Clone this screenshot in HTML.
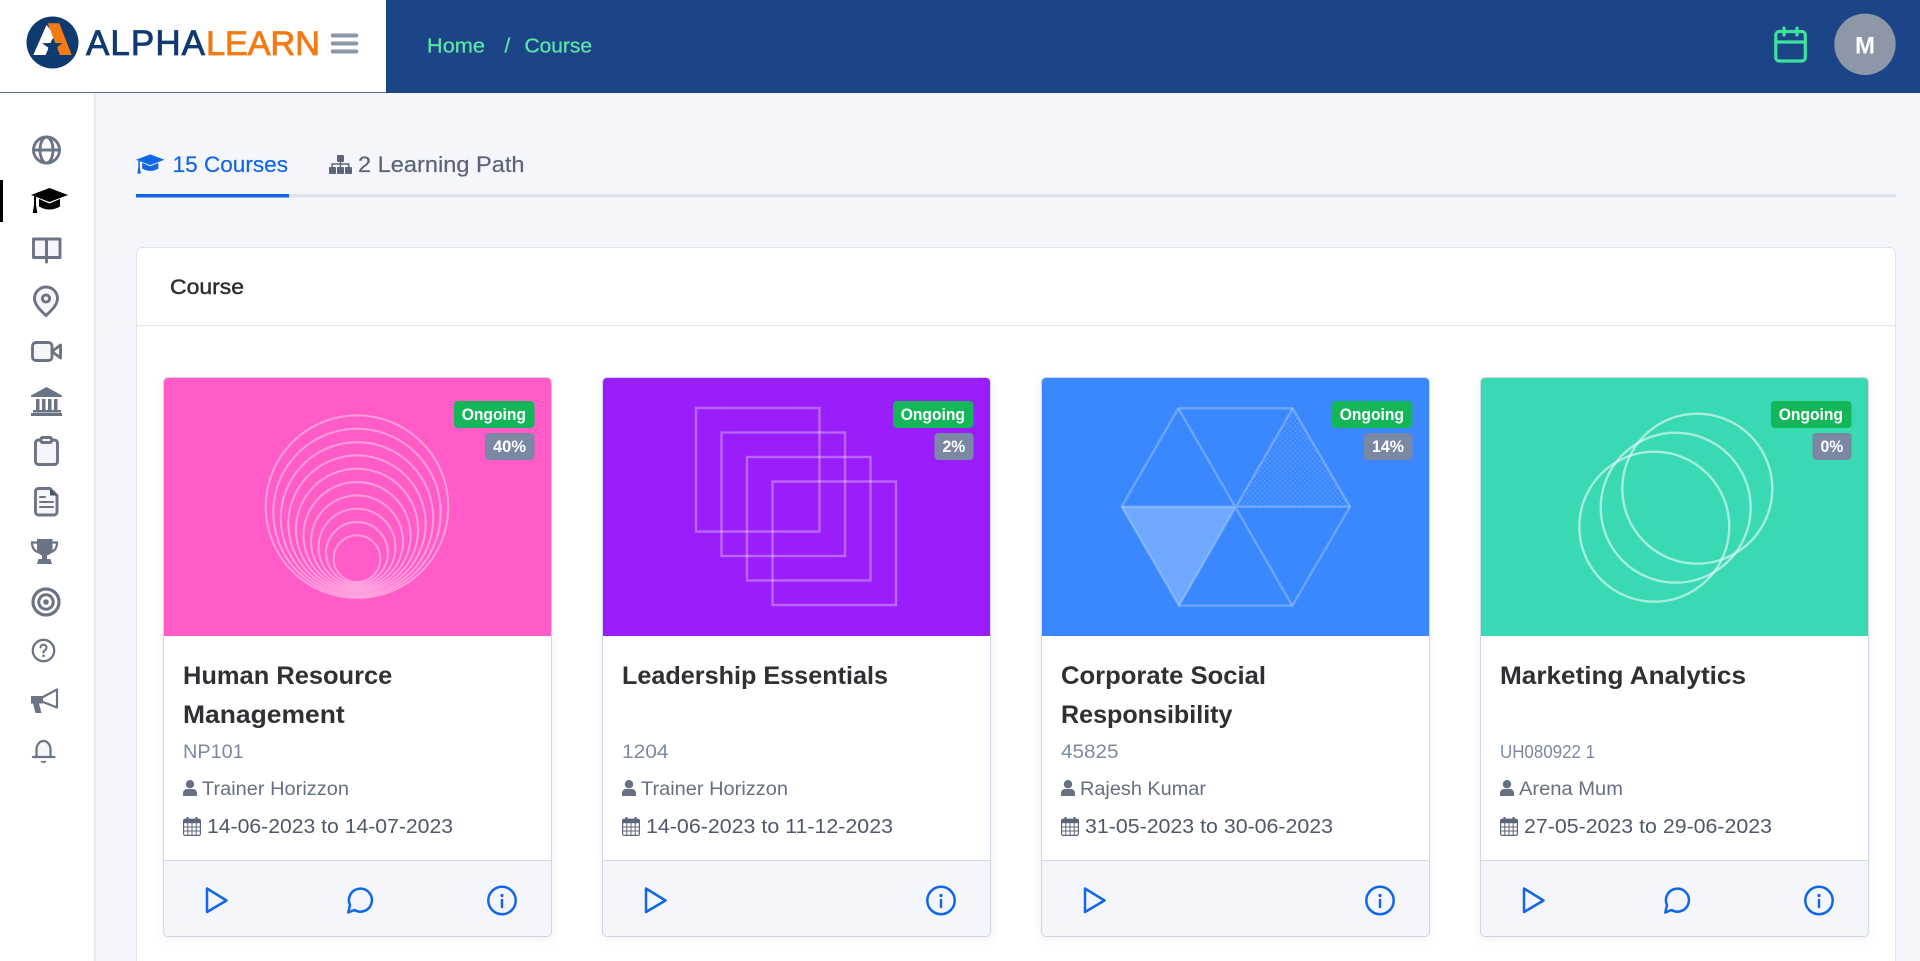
<!DOCTYPE html>
<html lang="en">
<head>
<meta charset="utf-8">
<title>Course</title>
<style>
html,body{margin:0;padding:0;width:1920px;height:961px;overflow:hidden;background:#f4f6fb}
svg{display:block;position:absolute;left:0;top:0}
text{font-family:"Liberation Sans",sans-serif}
.t{font-weight:700;font-size:25px;fill:#2f3033}
.c{font-size:19.5px;fill:#7c89a3}
.n{font-size:19.5px;fill:#667080}
.d{font-size:20px;fill:#4f586b}
.b{font-weight:700;font-size:17px;fill:#fff}
.ic{fill:#f5f6fa;stroke:#6b7485;stroke-width:2.9;stroke-linecap:round;stroke-linejoin:round}
.bl{fill:none;stroke:#1266ea;stroke-width:2.5;stroke-linecap:round;stroke-linejoin:round}
</style>
</head>
<body>
<svg width="1920" height="961" viewBox="0 0 1920 961" xmlns="http://www.w3.org/2000/svg">
<defs>
  <filter id="sh" x="-5%" y="-5%" width="110%" height="110%"><feDropShadow dx="0" dy="2" stdDeviation="4" flood-color="#5a6a90" flood-opacity=".10"/></filter>
  <pattern id="dots" width="5" height="5" patternUnits="userSpaceOnUse"><circle cx="1.5" cy="1.5" r="1.1" fill="#fff" fill-opacity=".14"/><circle cx="4" cy="4" r="1.1" fill="#fff" fill-opacity=".14"/></pattern>
  <symbol id="cap" viewBox="0 0 37 25">
    <path d="M18.5 0 37 7 18.5 14 0 7Z"/>
    <path d="M8 11 18.5 15.5 29 11V18.5Q18.5 24.5 8 18.5Z"/>
    <path d="M3 8h2v9l1.3 8H1.7l1.3-8Z"/>
  </symbol>
  <symbol id="user" viewBox="0 0 14 16">
    <circle cx="7" cy="4.2" r="4.2" fill="#667080"/>
    <path d="M0 13.5C0 10.5 2 9 4 9h6c2 0 4 1.5 4 4.5V16H0Z" fill="#667080"/>
  </symbol>
  <symbol id="cal" viewBox="0 0 18 19">
    <path d="M3.5 0h2v3h-2zM12.5 0h2v3h-2z" fill="#5b6478"/>
    <rect x=".6" y="2.2" width="16.8" height="16.2" rx="1.5" fill="none" stroke="#5b6478" stroke-width="1.2"/>
    <rect x=".6" y="2.2" width="16.8" height="4" fill="#5b6478"/>
    <path d="M.6 10h16.8M.6 14h16.8M4.8 6v12M9 6v12M13.2 6v12" stroke="#5b6478" stroke-width="1"/>
  </symbol>
</defs>

<!-- Header -->
<rect x="0" y="0" width="1920" height="93" fill="#1c4587"/>
<rect x="0" y="0" width="386" height="92" fill="#fff"/>
<rect x="0" y="92" width="386" height="1" fill="#56698c"/>
<circle cx="52.5" cy="42.5" r="26" fill="#0f3a70"/>
<path d="M46.5 25 33.3 55H45.5L55 35Z" fill="#fff"/>
<path d="M47.7 23.3H59.3L71.7 55H60Z" fill="#f57a14"/>
<path d="M52.5 38.5 54.6 43 62.5 43.3 56.6 47.6 58.6 55 52.5 51 46.4 55 48.4 47.6 42 43.3 50.4 43Z" fill="#0f3a70"/>
<text x="86" y="55" font-size="35" textLength="119" lengthAdjust="spacing" fill="#0f3a70" stroke="#0f3a70" stroke-width=".8">ALPHA</text>
<text x="206" y="55" font-size="34.5" textLength="114" lengthAdjust="spacing" fill="#f57a14" stroke="#f57a14" stroke-width=".8">LEARN</text>
<path d="M332.8 35.5H356.2M332.8 43.5H356.2M332.8 51.5H356.2" stroke="#8a94a6" stroke-width="4" stroke-linecap="round"/>
<g fill="#5de3a8" stroke="#5de3a8" stroke-width=".3">
<text x="427" y="52.5" font-size="20.5" textLength="58" lengthAdjust="spacingAndGlyphs">Home</text>
<text x="504.5" y="52.5" font-size="20.5">/</text>
<text x="524.5" y="52.5" font-size="20.5" textLength="67.5" lengthAdjust="spacingAndGlyphs">Course</text>
</g>
<g fill="none" stroke="#3ee39b" stroke-width="3.2" stroke-linecap="round" stroke-linejoin="round">
  <rect x="1775.8" y="31.5" width="29.5" height="29.5" rx="3.5"/>
  <path d="M1775.8 42H1805.3M1784 28V35M1797 28V35"/>
</g>
<circle cx="1865" cy="44.3" r="30.7" fill="#8d97a8"/>
<text x="1865" y="53.5" font-size="24" font-weight="700" text-anchor="middle" fill="#fff">M</text>

<!-- Sidebar -->
<rect x="0" y="93" width="94" height="868" fill="#fff"/>
<rect x="94" y="93" width="1.5" height="868" fill="#e3e6f0"/>
<rect x="0" y="180" width="3" height="42" fill="#000"/>
<g class="ic">
  <circle cx="46.5" cy="150" r="13" fill="none"/><ellipse cx="46.5" cy="150" rx="6.5" ry="13" fill="none"/><path d="M33.5 150H59.5" fill="none"/>
  <path d="M46.5 239H33.5V257.5H46.5ZM46.5 239H60V257.5H46.5Z"/><path d="M46.5 239V262"/>
  <path d="M46 315.5C40 310 34.5 304.5 34.5 298.5A11.5 11.5 0 0 1 57.5 298.5C57.5 304.5 52 310 46 315.5Z"/><circle cx="46" cy="298.5" r="3.6" fill="none"/>
  <rect x="32.5" y="342.5" width="19.5" height="18" rx="3.5"/><path d="M52 351.5 60.5 345V358Z" fill="none"/>
  <rect x="35.5" y="440" width="22" height="24.5" rx="3"/><rect x="41" y="437.5" width="10.5" height="5" rx="1.5" fill="#f5f6fa"/>
  <path d="M38 488.5H50L57 495.5V512A3 3 0 0 1 54 515H38.5A3 3 0 0 1 35.5 512V491.5A3 3 0 0 1 38 488.5Z"/>
  <path d="M40 497H45M40 502H53M40 507H53" stroke-width="2" fill="none"/>
  <circle cx="46" cy="602" r="13" stroke-width="3.2" fill="none"/><circle cx="46" cy="602" r="7.2" stroke-width="3" fill="none"/>
  <circle cx="43.5" cy="650.5" r="10.7" stroke-width="2.3" fill="none"/>
  <path d="M40.5 647.5A3 3 0 1 1 45 650.2C44 650.8 43.5 651.4 43.5 652.6" stroke-width="2" fill="none"/>
  <path d="M43 697 57 689.5V707.5L43 702" stroke-width="2.2" fill="none"/>
  <path d="M36.5 757V749.5A7 8.5 0 0 1 50.5 749.5V757"  stroke-width="2.2"/><path d="M33 757H54.5" stroke-width="2.2"/>
  <path d="M41.5 761.5Q43.5 763 45.5 761.5" stroke-width="1.6" fill="none"/>
</g>
<path d="M50 488.5 57 495.5H50Z" fill="#4b5367"/>
<g fill="#6b7485">
  <path d="M46.5 387 62 395.5V397H31V395.5Z"/>
  <path d="M36 399h3.5v11H36zM42 399h3.5v11H42zM48 399h3.5v11H48zM54 399h3.5v11H54z"/>
  <rect x="33" y="410" width="28" height="2.5"/><rect x="31" y="413" width="31" height="3"/>
  <circle cx="46" cy="602" r="2.8"/>
  <circle cx="43.5" cy="655.8" r="1.3"/>
  <path d="M37 539H52.5V549Q52.5 554 47 555.5V559H50.5L52 564H37L38.5 559H42V555.5Q37 554 37 549Z"/>
  <path d="M31 696H43V703.5H39L41.5 713H35.5L33 703.5H31Z"/>
</g>
<path d="M37.5 542.5H32Q32 551 39.5 552.5M52 542.5H57Q57 551 49.5 552.5" fill="none" stroke="#6b7485" stroke-width="2.2"/>
<use href="#cap" x="31" y="188" width="37" height="25" fill="#000"/>

<!-- Tabs -->
<use href="#cap" x="136" y="154" width="28.5" height="20" fill="#1266ea"/>
<text x="172.6" y="172" font-size="22" textLength="115.4" lengthAdjust="spacingAndGlyphs" fill="#1266ea" stroke="#1266ea" stroke-width=".2">15 Courses</text>
<g fill="#5b6478">
  <rect x="337" y="155" width="7" height="7" rx="1"/>
  <rect x="329" y="167" width="7" height="7" rx="1"/><rect x="337" y="167" width="7" height="7" rx="1"/><rect x="345" y="167" width="7" height="7" rx="1"/>
</g>
<path d="M340.5 161V167.5M332.2 167.5V164H348.8V167.5" fill="none" stroke="#5b6478" stroke-width="1.4"/>
<text x="358" y="172" font-size="22" textLength="166.5" lengthAdjust="spacingAndGlyphs" fill="#5b6478" stroke="#5b6478" stroke-width=".2">2 Learning Path</text>
<rect x="136" y="194" width="1760" height="3.5" fill="#dfe2ec"/>
<rect x="136" y="194" width="153" height="3.5" fill="#1266ea"/>

<!-- Course panel -->
<rect x="136.5" y="247.5" width="1759" height="740" rx="6" fill="#fff" stroke="#e2e5ee"/>
<rect x="137" y="325" width="1758" height="1.2" fill="#e2e5ee"/>
<text x="170" y="294" font-size="21.5" textLength="74" lengthAdjust="spacingAndGlyphs" fill="#2e2e2e" stroke="#2e2e2e" stroke-width=".45">Course</text>

<!-- Card 1 -->
<g transform="translate(163,377)">
  <rect x=".5" y=".5" width="388" height="559" rx="5" fill="#fff" stroke="#cfd5e2" filter="url(#sh)"/>
  <path d="M1 5A4 4 0 0 1 5 1H384A4 4 0 0 1 388 5V259H1Z" fill="#ff5cc8"/>
  <g fill="none" stroke="#fff" stroke-opacity=".4" stroke-width="2">
    <circle cx="194" cy="129.7" r="91.3"/><circle cx="194" cy="135.5" r="83.75"/><circle cx="194" cy="141.3" r="76.2"/><circle cx="194" cy="147" r="68.65"/><circle cx="194" cy="152.8" r="61.1"/><circle cx="194" cy="158.6" r="53.55"/><circle cx="194" cy="164.4" r="46"/><circle cx="194" cy="170.2" r="38.45"/><circle cx="194" cy="175.9" r="30.9"/><circle cx="194" cy="181.7" r="23.35"/>
  </g>
  <rect x="291" y="24" width="80.5" height="27" rx="4" fill="#14b65a"/>
  <text x="298.7" y="43" class="b" textLength="64.3" lengthAdjust="spacingAndGlyphs">Ongoing</text>
  <rect x="322" y="56" width="49.5" height="27" rx="4" fill="#7a88a4"/>
  <text x="330" y="75" class="b" textLength="33" lengthAdjust="spacingAndGlyphs">40%</text>
  <text x="20" y="307" class="t" textLength="209.3" lengthAdjust="spacingAndGlyphs">Human Resource</text>
  <text x="20" y="346" class="t" textLength="161.7" lengthAdjust="spacingAndGlyphs">Management</text>
  <text x="20" y="381" class="c" textLength="60.7" lengthAdjust="spacingAndGlyphs">NP101</text>
  <use href="#user" x="20" y="403" width="14" height="16"/>
  <text x="39" y="418" class="n" textLength="147" lengthAdjust="spacingAndGlyphs">Trainer Horizzon</text>
  <use href="#cal" x="20" y="440" width="18" height="19"/>
  <text x="44" y="456" class="d" textLength="246" lengthAdjust="spacingAndGlyphs">14-06-2023 to 14-07-2023</text>
  <path d="M1 483.5H388V554A5 5 0 0 1 383 559H6A5 5 0 0 1 1 554Z" fill="#f4f6fb"/>
  <path d="M1 483.5H388" stroke="#d3d8e4"/>
  <path d="M44 511.5 63.5 523.5 44 535Z" class="bl"/>
  <path d="M191.5 533A11.5 11.5 0 1 0 187 528L185.3 535.5Z" class="bl"/>
  <circle cx="339" cy="523.5" r="13.7" class="bl"/>
  <path d="M339 523V530" class="bl"/><circle cx="339" cy="518.5" r="1.6" fill="#1266ea"/>
</g>

<!-- Card 2 -->
<g transform="translate(602,377)">
  <rect x=".5" y=".5" width="388" height="559" rx="5" fill="#fff" stroke="#cfd5e2" filter="url(#sh)"/>
  <path d="M1 5A4 4 0 0 1 5 1H384A4 4 0 0 1 388 5V259H1Z" fill="#9a1efc"/>
  <g fill="none" stroke="#fff" stroke-opacity=".32" stroke-width="2.4">
    <rect x="94" y="31" width="123.5" height="123.5"/><rect x="119.5" y="55.5" width="123.5" height="123.5"/><rect x="145" y="80" width="123.5" height="123.5"/><rect x="170.5" y="104.5" width="123.5" height="123.5"/>
  </g>
  <rect x="291" y="24" width="80.5" height="27" rx="4" fill="#14b65a"/>
  <text x="298.7" y="43" class="b" textLength="64.3" lengthAdjust="spacingAndGlyphs">Ongoing</text>
  <rect x="332.5" y="56" width="39" height="27" rx="4" fill="#7a88a4"/>
  <text x="340.5" y="75" class="b" textLength="22.7" lengthAdjust="spacingAndGlyphs">2%</text>
  <text x="20" y="307" class="t" textLength="266" lengthAdjust="spacingAndGlyphs">Leadership Essentials</text>
  <text x="20" y="381" class="c" textLength="46.5" lengthAdjust="spacingAndGlyphs">1204</text>
  <use href="#user" x="20" y="403" width="14" height="16"/>
  <text x="39" y="418" class="n" textLength="147" lengthAdjust="spacingAndGlyphs">Trainer Horizzon</text>
  <use href="#cal" x="20" y="440" width="18" height="19"/>
  <text x="44" y="456" class="d" textLength="247" lengthAdjust="spacingAndGlyphs">14-06-2023 to 11-12-2023</text>
  <path d="M1 483.5H388V554A5 5 0 0 1 383 559H6A5 5 0 0 1 1 554Z" fill="#f4f6fb"/>
  <path d="M1 483.5H388" stroke="#d3d8e4"/>
  <path d="M44 511.5 63.5 523.5 44 535Z" class="bl"/>
  <circle cx="339" cy="523.5" r="13.7" class="bl"/>
  <path d="M339 523V530" class="bl"/><circle cx="339" cy="518.5" r="1.6" fill="#1266ea"/>
</g>

<!-- Card 3 -->
<g transform="translate(1041,377)">
  <rect x=".5" y=".5" width="388" height="559" rx="5" fill="#fff" stroke="#cfd5e2" filter="url(#sh)"/>
  <path d="M1 5A4 4 0 0 1 5 1H384A4 4 0 0 1 388 5V259H1Z" fill="#3a87fe"/>
  <path d="M80.7 129.7H194.7L138 228.7Z" fill="#6fa9ff"/>
  <path d="M251.7 31.3 309 129.7H194.7Z" fill="url(#dots)"/>
  <g fill="none" stroke="#fff" stroke-opacity=".25" stroke-width="2.4" stroke-linejoin="round">
    <path d="M80.7 129.7 137.3 31.3H251.7L309 129.7 251.3 228.7H138Z"/>
    <path d="M80.7 129.7H309M137.3 31.3 251.3 228.7M251.7 31.3 138 228.7"/>
  </g>
  <rect x="291" y="24" width="80.5" height="27" rx="4" fill="#14b65a"/>
  <text x="298.7" y="43" class="b" textLength="64.3" lengthAdjust="spacingAndGlyphs">Ongoing</text>
  <rect x="323" y="56" width="48.5" height="27" rx="4" fill="#7a88a4"/>
  <text x="331" y="75" class="b" textLength="32" lengthAdjust="spacingAndGlyphs">14%</text>
  <text x="20" y="307" class="t" textLength="205" lengthAdjust="spacingAndGlyphs">Corporate Social</text>
  <text x="20" y="346" class="t" textLength="171.5" lengthAdjust="spacingAndGlyphs">Responsibility</text>
  <text x="20" y="381" class="c" textLength="57.5" lengthAdjust="spacingAndGlyphs">45825</text>
  <use href="#user" x="20" y="403" width="14" height="16"/>
  <text x="39" y="418" class="n" textLength="126" lengthAdjust="spacingAndGlyphs">Rajesh Kumar</text>
  <use href="#cal" x="20" y="440" width="18" height="19"/>
  <text x="44" y="456" class="d" textLength="248" lengthAdjust="spacingAndGlyphs">31-05-2023 to 30-06-2023</text>
  <path d="M1 483.5H388V554A5 5 0 0 1 383 559H6A5 5 0 0 1 1 554Z" fill="#f4f6fb"/>
  <path d="M1 483.5H388" stroke="#d3d8e4"/>
  <path d="M44 511.5 63.5 523.5 44 535Z" class="bl"/>
  <circle cx="339" cy="523.5" r="13.7" class="bl"/>
  <path d="M339 523V530" class="bl"/><circle cx="339" cy="518.5" r="1.6" fill="#1266ea"/>
</g>

<!-- Card 4 -->
<g transform="translate(1480,377)">
  <rect x=".5" y=".5" width="388" height="559" rx="5" fill="#fff" stroke="#cfd5e2" filter="url(#sh)"/>
  <path d="M1 5A4 4 0 0 1 5 1H384A4 4 0 0 1 388 5V259H1Z" fill="#39d9b3"/>
  <g fill="none" stroke="#fff" stroke-opacity=".55" stroke-width="2.4">
    <circle cx="174.3" cy="149.7" r="75"/><circle cx="195.7" cy="130.7" r="75"/><circle cx="217.3" cy="111.7" r="75"/>
  </g>
  <rect x="291" y="24" width="80.5" height="27" rx="4" fill="#14b65a"/>
  <text x="298.7" y="43" class="b" textLength="64.3" lengthAdjust="spacingAndGlyphs">Ongoing</text>
  <rect x="332.5" y="56" width="39" height="27" rx="4" fill="#7a88a4"/>
  <text x="340.5" y="75" class="b" textLength="22.7" lengthAdjust="spacingAndGlyphs">0%</text>
  <text x="20" y="307" class="t" textLength="246" lengthAdjust="spacingAndGlyphs">Marketing Analytics</text>
  <text x="20" y="381" class="c" style="font-size:18px" textLength="95" lengthAdjust="spacingAndGlyphs">UH080922 1</text>
  <use href="#user" x="20" y="403" width="14" height="16"/>
  <text x="39" y="418" class="n" textLength="104" lengthAdjust="spacingAndGlyphs">Arena Mum</text>
  <use href="#cal" x="20" y="440" width="18" height="19"/>
  <text x="44" y="456" class="d" textLength="248" lengthAdjust="spacingAndGlyphs">27-05-2023 to 29-06-2023</text>
  <path d="M1 483.5H388V554A5 5 0 0 1 383 559H6A5 5 0 0 1 1 554Z" fill="#f4f6fb"/>
  <path d="M1 483.5H388" stroke="#d3d8e4"/>
  <path d="M44 511.5 63.5 523.5 44 535Z" class="bl"/>
  <path d="M191.5 533A11.5 11.5 0 1 0 187 528L185.3 535.5Z" class="bl"/>
  <circle cx="339" cy="523.5" r="13.7" class="bl"/>
  <path d="M339 523V530" class="bl"/><circle cx="339" cy="518.5" r="1.6" fill="#1266ea"/>
</g>
</svg>
</body>
</html>
